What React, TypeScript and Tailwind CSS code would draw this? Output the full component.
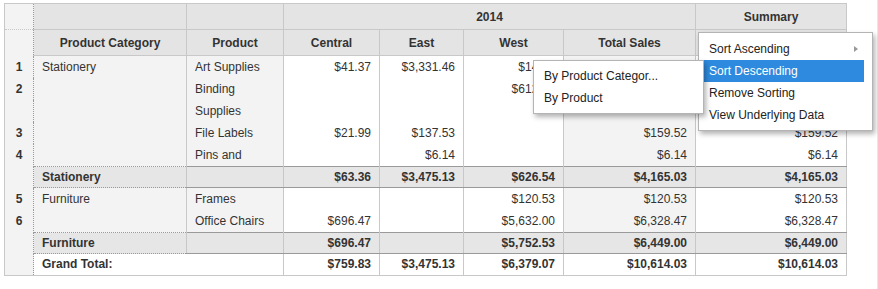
import React from "react";

const font = "font-['Liberation_Sans',Arial,Helvetica,sans-serif]";

const SOLID = "border-[#c8c8c8]";

type Row = {
  n?: string;
  pc?: string;
  p?: React.ReactNode;
  c?: string;
  e?: string;
  w?: string;
  t?: string;
  s?: string;
};

const dataRows: Row[] = [
  { n: "1", pc: "Stationery", p: "Art Supplies", c: "$41.37", e: "$3,331.46", w: "$14.49", t: "$3,387.32", s: "$3,387.32" },
  { n: "2", p: "Binding", w: "$612.05", t: "$612.05", s: "$612.05" },
  { p: "Supplies" },
  { n: "3", p: "File Labels", c: "$21.99", e: "$137.53", t: "$159.52", s: "$159.52" },
  { n: "4", p: "Pins and", e: "$6.14", t: "$6.14", s: "$6.14" },
];

const dataRows2: Row[] = [
  { n: "5", pc: "Furniture", p: "Frames", w: "$120.53", t: "$120.53", s: "$120.53" },
  { n: "6", p: "Office Chairs", c: "$696.47", w: "$5,632.00", t: "$6,328.47", s: "$6,328.47" },
];

function RnCell({ children }: { children?: React.ReactNode }) {
  return (
    <td className="bg-[#f3f3f3] border-r border-dotted border-r-[#9a9a9a] text-center font-bold align-top p-0 leading-[22px]">
      {children}
    </td>
  );
}

function DataRow({ r }: { r: Row }) {
  const num = "border-l " + SOLID + " text-right pr-2 align-top leading-[22px] p-0";
  return (
    <tr className="h-[22px]">
      <RnCell>{r.n}</RnCell>
      <td className="bg-[#f3f3f3] align-top leading-[22px] p-0 pl-2">{r.pc}</td>
      <td className={"bg-[#f3f3f3] border-l " + SOLID + " pl-2 align-top leading-[22px] whitespace-nowrap overflow-hidden"}>{r.p}</td>
      <td className={"bg-white " + num}>{r.c}</td>
      <td className={"bg-white " + num}>{r.e}</td>
      <td className={"bg-white " + num}>{r.w}</td>
      <td className={"bg-[#f3f3f3] " + num}>{r.t}</td>
      <td className={"bg-white " + num}>{r.s}</td>
    </tr>
  );
}

function SubRow({ label, c, e, w, t, s, grand }: { label: string; c: string; e: string; w: string; t: string; s: string; grand?: boolean }) {
  const bg = grand ? "bg-white" : "bg-[#e6e6e6]";
  const hb = grand
    ? "border-t border-dotted border-t-[#9a9a9a]"
    : "border-t border-b border-dotted border-t-[#9a9a9a] border-b-[#9a9a9a]";
  const lh = grand ? "leading-[21px]" : "leading-[20px]";
  const num = `${bg} ${hb} border-l border-l-[#c8c8c8] border-solid text-right pr-2 font-bold ${lh} p-0 align-top`;
  return (
    <tr className={grand ? "h-[21px]" : "h-[20px]"}>
      <RnCell />
      {grand ? (
        <td colSpan={2} className={`${bg} ${hb} pl-2 font-bold ${lh} align-top`}>{label}</td>
      ) : (
        <>
          <td className={`${bg} ${hb} pl-2 font-bold ${lh} align-top`}>{label}</td>
          <td className={num}></td>
        </>
      )}
      <td className={num}>{c}</td>
      <td className={num}>{e}</td>
      <td className={num}>{w}</td>
      <td className={num}>{t}</td>
      <td className={num}>{s}</td>
    </tr>
  );
}

export default function App() {
  const hd = "bg-[#e4e4e4] border-b border-l " + SOLID + " font-bold text-center p-0";
  return (
    <div className={`relative w-[878px] h-[289px] bg-white overflow-hidden text-[12px] text-[#333] ${font}`}>
      <div className="pl-[4px] pt-[3px]">
        <table className={"table-fixed border-collapse border " + SOLID + " w-[842px]"}>
          <colgroup>
            <col className="w-[29px]" />
            <col className="w-[153px]" />
            <col className="w-[97px]" />
            <col className="w-[96px]" />
            <col className="w-[84px]" />
            <col className="w-[100px]" />
            <col className="w-[132px]" />
            <col className="w-[151px]" />
          </colgroup>
          <tbody>
            <tr className="h-[26px]">
              <td className="bg-[#f3f3f3] border-r border-dotted border-r-[#9a9a9a] border-b border-b-[#c8c8c8] border-b-solid p-0"></td>
              <td className={"bg-[#e4e4e4] border-b " + SOLID}></td>
              <td className={hd}></td>
              <td colSpan={4} className={hd}>2014</td>
              <td className={hd}>Summary</td>
            </tr>
            <tr className="h-[26px]">
              <td className="bg-[#f3f3f3] border-r border-dotted border-r-[#9a9a9a] p-0"></td>
              <td className={"bg-[#e4e4e4] border-b " + SOLID + " font-bold text-center"}>Product Category</td>
              <td className={hd}>Product</td>
              <td className={hd}>Central</td>
              <td className={hd}>East</td>
              <td className={hd}>West</td>
              <td className={hd}>Total Sales</td>
              <td className={hd}></td>
            </tr>
            {dataRows.map((r, i) => (
              <DataRow key={i} r={r} />
            ))}
            <SubRow label="Stationery" c="$63.36" e="$3,475.13" w="$626.54" t="$4,165.03" s="$4,165.03" />
            {dataRows2.map((r, i) => (
              <DataRow key={i} r={r} />
            ))}
            <SubRow label="Furniture" c="$696.47" e="" w="$5,752.53" t="$6,449.00" s="$6,449.00" />
            <SubRow grand label="Grand Total:" c="$759.83" e="$3,475.13" w="$6,379.07" t="$10,614.03" s="$10,614.03" />
          </tbody>
        </table>
      </div>

      {/* page edge line */}
      <div className="absolute right-0 top-0 h-full w-px bg-[#e8e8e8]" />

      {/* main context menu */}
      <div className="absolute left-[698px] top-[32px] w-[175px] h-[99px] bg-white border border-[#b4b4b4] shadow-[2px_3px_5px_rgba(0,0,0,0.3)] pt-[5px] text-[#222]">
        <div className="relative h-[22px] leading-[22px] ml-[5px] mr-[8px] pl-[5px]">
          Sort Ascending
          <span className="absolute right-[6px] top-[8px] w-0 h-0 border-y-[3.5px] border-y-transparent border-l-[4px] border-l-[#999]" />
        </div>
        <div className="h-[22px] leading-[22px] ml-[5px] mr-[8px] pl-[5px] bg-[#2e8ade] text-white">Sort Descending</div>
        <div className="h-[22px] leading-[22px] ml-[5px] mr-[8px] pl-[5px]">Remove Sorting</div>
        <div className="h-[22px] leading-[22px] ml-[5px] mr-[8px] pl-[5px]">View Underlying Data</div>
      </div>

      {/* submenu */}
      <div className="absolute left-[533px] top-[60px] w-[171px] h-[54px] bg-white border border-[#b4b4b4] shadow-[2px_3px_5px_rgba(0,0,0,0.3)] pt-[4px] text-[#222]">
        <div className="h-[22px] leading-[22px] pl-[10px]">By Product Categor...</div>
        <div className="h-[22px] leading-[22px] pl-[10px]">By Product</div>
      </div>
    </div>
  );
}
